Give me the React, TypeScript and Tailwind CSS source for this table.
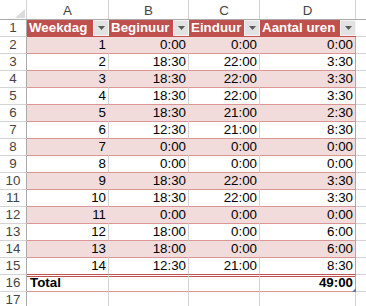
import React from 'react';

type Row = { n: number; cells: string[]; kind: 'head' | 'band' | 'plain' | 'total' | 'empty' };

const widths = ['w-[82px]', 'w-[80px]', 'w-[71px]', 'w-[96px]'];
const letters = ['A', 'B', 'C', 'D'];
const headers = ['Weekdag', 'Beginuur', 'Einduur', 'Aantal uren'];

const data: string[][] = [
  ['1', '0:00', '0:00', '0:00'],
  ['2', '18:30', '22:00', '3:30'],
  ['3', '18:30', '22:00', '3:30'],
  ['4', '18:30', '22:00', '3:30'],
  ['5', '18:30', '21:00', '2:30'],
  ['6', '12:30', '21:00', '8:30'],
  ['7', '0:00', '0:00', '0:00'],
  ['8', '0:00', '0:00', '0:00'],
  ['9', '18:30', '22:00', '3:30'],
  ['10', '18:30', '22:00', '3:30'],
  ['11', '0:00', '0:00', '0:00'],
  ['12', '18:00', '0:00', '6:00'],
  ['13', '18:00', '0:00', '6:00'],
  ['14', '12:30', '21:00', '8:30'],
];

const rows: Row[] = [
  { n: 1, cells: headers, kind: 'head' },
  ...data.map((cells, i): Row => ({ n: i + 2, cells, kind: i % 2 === 0 ? 'band' : 'plain' })),
  { n: 16, cells: ['Total', '', '', '49:00'], kind: 'total' },
  { n: 17, cells: ['', '', '', ''], kind: 'empty' },
];

function FilterButton() {
  return (
    <div className="absolute right-0 top-0 flex h-[16px] w-[16px] items-center justify-center border border-[#f4f4f4] bg-[#e2e2e2]">
      <svg width="7" height="4" viewBox="0 0 7 4">
        <path d="M0 0h7L3.5 4z" fill="#5a5a5a" />
      </svg>
    </div>
  );
}

function DataCell({ row, col, text }: { row: Row; col: number; text: string }) {
  const last = col === 3;
  if (row.kind === 'head') {
    return (
      <div className={`relative h-[17px] shrink-0 ${widths[col]} bg-[#c0504d] pl-[2px] font-bold text-white`}>
        {text}
        <FilterButton />
      </div>
    );
  }
  if (row.kind === 'empty') {
    return <div className={`h-[17px] shrink-0 ${widths[col]} border-r border-b border-[#d4d4d4]`} />;
  }
  const bg = row.kind === 'band' ? 'bg-[#f2dcdb]' : 'bg-white';
  const right = last ? 'border-r-[#da9694]' : row.kind === 'band' ? 'border-r-[#f2dcdb]' : 'border-r-[#d4d4d4]';
  const bottom = row.n === 15 ? 'border-b-[#c0504d]' : 'border-b-[#da9694]';
  const total = row.kind === 'total' ? 'font-bold shadow-[inset_0_1px_0_#ffffff,inset_0_2px_0_#c0504d]' : '';
  const align = row.kind === 'total' && col === 0 ? 'text-left pl-[3px]' : 'text-right pr-[2px]';
  return (
    <div className={`relative h-[17px] shrink-0 ${widths[col]} border-r border-b ${right} ${bottom} ${bg} ${total} ${align}`}>
      {text}
      {row.kind === 'total' && last && (
        <div className="absolute -bottom-[1px] -right-[1px] h-[4px] w-[4px] bg-[#5b78b6] [clip-path:polygon(100%_0,100%_100%,0_100%)]" />
      )}
    </div>
  );
}

export default function App() {
  return (
    <div className="h-[306px] w-[366px] overflow-hidden bg-white text-[13.33px] leading-[16px] text-black [font-family:'Liberation_Sans',Arial,sans-serif]">
      {/* column letters */}
      <div className="flex h-[20px] border-b border-[#ababab] text-[#444]">
        <div className="relative w-[27px] shrink-0 border-r border-[#d4d4d4]">
          <svg className="absolute bottom-[1px] right-[1px]" width="10" height="9" viewBox="0 0 10 9">
            <path d="M10 0v9H0z" fill="#dcdcdc" />
          </svg>
        </div>
        {letters.map((l, i) => (
          <div key={l} className={`${widths[i]} shrink-0 border-r border-[#d4d4d4] pt-[3px] text-center`}>
            {l}
          </div>
        ))}
        <div className="flex-1" />
      </div>

      {rows.map(row => (
        <div key={row.n} className="flex">
          <div className="h-[17px] w-[27px] shrink-0 border-r border-b border-r-[#ababab] border-b-[#d4d4d4] text-center text-[#444]">
            {row.n}
          </div>
          {row.cells.map((c, i) => (
            <DataCell key={i} row={row} col={i} text={c} />
          ))}
          <div className="h-[17px] flex-1 border-b border-[#d4d4d4]" />
        </div>
      ))}
    </div>
  );
}
